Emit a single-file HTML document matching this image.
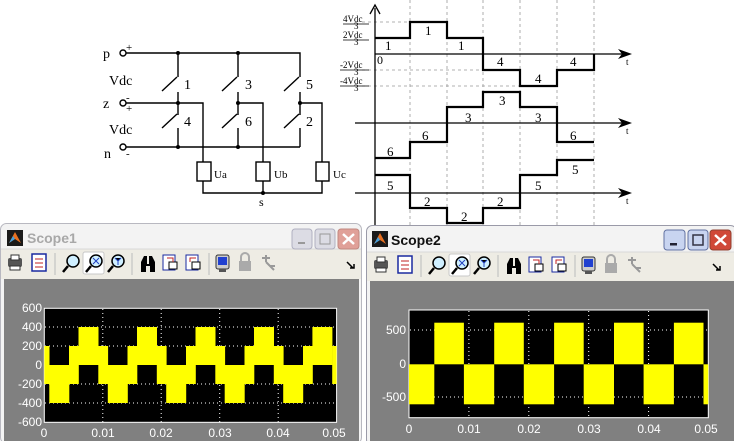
<!DOCTYPE html>
<html><head><meta charset="utf-8"><style>
html,body{margin:0;padding:0;background:#fff;width:734px;height:441px;overflow:hidden}
svg{display:block}
.sf{font-family:"Liberation Serif",serif;fill:#000}
.ss{font-family:"Liberation Sans",sans-serif;fill:#fff;font-size:12px}
</style></head><body>
<svg width="734" height="441" viewBox="0 0 734 441" xmlns="http://www.w3.org/2000/svg">
<rect width="734" height="441" fill="#fff"/>
<!-- circuit -->
<g stroke="#000" stroke-width="1.4" fill="none">
<circle cx="123" cy="53" r="3" fill="#fff"/>
<circle cx="123" cy="103" r="3" fill="#fff"/>
<circle cx="123" cy="147" r="3" fill="#fff"/>
<path d="M126 53H300V77M178 53V77M238 53V77"/>
<path d="M162 91L177 77M222 91L237 77M284 91L299 77"/>
<path d="M178 92V115M238 92V115M300 92V115"/>
<path d="M126 103H203V162M238 103H263V162M300 103H322V162"/>
<path d="M162 128L177 114M222 128L237 114M284 128L299 114"/>
<path d="M178 128V147M238 128V147M300 128V147M126 147H300"/>
<rect x="197" y="162" width="14" height="19"/><rect x="256" y="162" width="14" height="19"/><rect x="316" y="162" width="13" height="19"/>
<path d="M203 181V193H322V181M263 181V193"/>
</g>
<g fill="#000"><circle cx="178" cy="53" r="2"/><circle cx="238" cy="53" r="2"/><circle cx="178" cy="103" r="2"/><circle cx="238" cy="103" r="2"/><circle cx="300" cy="103" r="2"/><circle cx="178" cy="147" r="2"/><circle cx="238" cy="147" r="2"/><circle cx="263" cy="193" r="2"/></g>
<g class="sf" font-size="14">
<text x="103" y="58">p</text><text x="103" y="108">z</text><text x="104" y="158">n</text>
<text x="109" y="85">Vdc</text><text x="109" y="134">Vdc</text>
<text x="184" y="89">1</text><text x="245" y="89">3</text><text x="306" y="89">5</text>
<text x="184" y="126">4</text><text x="245" y="126">6</text><text x="306" y="126">2</text>
<text x="259" y="206" font-size="12">s</text>
</g>
<g class="sf" font-size="11"><text x="126" y="51">+</text><text x="126" y="101">-</text><text x="126" y="112">+</text><text x="126" y="157">-</text>
<text x="214" y="178">Ua</text><text x="274" y="178">Ub</text><text x="333" y="178">Uc</text></g>
<!-- waveforms diagram -->
<g stroke="#999" stroke-width="0.8" stroke-dasharray="3,3" fill="none">
<path d="M410 0V225M447 0V225M483 0V225M520 0V225M557 0V225M594 0V225"/>
<path d="M362 22H410M362 70H483M362 86H520"/>
</g>
<g stroke="#000" stroke-width="1.3" fill="none">
<path d="M375 8V225M370 14L375 5L380 14"/>
<path d="M375 54H628M355 123H628M355 193H628"/>
</g>
<g fill="#000"><path d="M618 49L632 54L618 59L622 54Z"/><path d="M618 118L632 123L618 128L622 123Z"/><path d="M618 188L632 193L618 198L622 193Z"/></g>
<g stroke="#000" stroke-width="2.2" fill="none">
<path d="M375 38H410V22H447V38H483V70H520V86H557V70H594V54"/>
<path d="M375 158H410V142H447V107H483V92H520V107H557V142H594"/>
<path d="M375 175H410V208H447V223H483V208H520V175H557V160H594"/>
</g>
<g class="sf" font-size="13">
<text x="385" y="50">1</text><text x="425" y="35">1</text><text x="458" y="50">1</text>
<text x="497" y="66">4</text><text x="535" y="83">4</text><text x="570" y="66">4</text>
<text x="387" y="156">6</text><text x="422" y="140">6</text><text x="465" y="122">3</text><text x="499" y="105">3</text><text x="535" y="122">3</text><text x="570" y="140">6</text>
<text x="387" y="190">5</text><text x="424" y="206">2</text><text x="461" y="221">2</text><text x="497" y="206">2</text><text x="535" y="190">5</text><text x="572" y="174">5</text>
<text x="377" y="64" font-size="12">0</text>
<text x="626" y="65" font-size="9">t</text><text x="626" y="134" font-size="9">t</text><text x="626" y="204" font-size="9">t</text>
</g>
<g class="sf" font-size="9">
<text x="343" y="22">4Vdc</text><text x="354" y="29">3</text>
<text x="343" y="38">2Vdc</text><text x="354" y="45">3</text>
<text x="340" y="68">-2Vdc</text><text x="354" y="75">3</text>
<text x="340" y="84">-4Vdc</text><text x="354" y="91">3</text>
</g>
<g stroke="#000" stroke-width="0.7"><path d="M343 24H369M343 40H369M340 70H369M340 86H369"/></g>

<!-- Scope1 window -->
<rect x="0.5" y="223.5" width="361" height="220" rx="6" fill="#f3f3f3" stroke="#b8b8c0"/>
<rect x="1" y="249" width="360" height="30" fill="#eeece4"/>
<line x1="1" y1="249" x2="361" y2="249" stroke="#d8d8d8"/>
<rect x="4" y="279" width="355" height="162" fill="#808080"/>
<g><rect x="7" y="230" width="16" height="16" fill="#1a1a1a"/><path d="M9 243L15 232L21 243L15 239Z" fill="#e87020"/><path d="M9 243L13 236L15 239Z" fill="#40a0e0"/></g>
<text x="27" y="243" font-family="Liberation Sans,sans-serif" font-size="14" font-weight="bold" fill="#a8a8a8">Scope1</text>
<rect x="292" y="229" width="20" height="20" rx="3" fill="#dcdce4" stroke="#b0b0c0"/><rect x="298" y="242" width="7" height="2" fill="#999"/>
<rect x="315" y="229" width="20" height="20" rx="3" fill="#dcdce4" stroke="#b0b0c0"/><rect x="320" y="234" width="10" height="10" fill="none" stroke="#999"/>
<rect x="338" y="229" width="21" height="20" rx="3" fill="#e0a098" stroke="#c08880"/><path d="M343 234L354 244M354 234L343 244" stroke="#fff" stroke-width="2.5"/>
<!-- toolbar icons scope1 -->
<g id="tb">
<rect x="8" y="258" width="14" height="9" rx="2" fill="#555"/><rect x="11" y="255" width="8" height="5" fill="#fff" stroke="#333"/><rect x="10" y="266" width="10" height="4" fill="#fff" stroke="#333"/>
<rect x="32" y="254" width="14" height="17" fill="#fff" stroke="#1a2aa0" stroke-width="1.5"/><path d="M35 259H43M35 263H43M35 267H43" stroke="#c02020"/>
<line x1="55" y1="253" x2="55" y2="275" stroke="#bbb"/>
<circle cx="73" cy="261" r="6" fill="#cfefff" stroke="#000" stroke-width="1.5"/><path d="M68 266L63 272" stroke="#000" stroke-width="2.5"/>
<rect x="83" y="252" width="21" height="22" rx="2" fill="#fff" stroke="#c8c8c8"/>
<circle cx="96" cy="261" r="6" fill="#cfefff" stroke="#000" stroke-width="1.5"/><path d="M91 266L86 272" stroke="#000" stroke-width="2.5"/><path d="M93 258L99 264M99 258L93 264" stroke="#2040c0"/>
<circle cx="118" cy="261" r="6" fill="#cfefff" stroke="#000" stroke-width="1.5"/><path d="M113 266L108 272" stroke="#000" stroke-width="2.5"/><path d="M115 258L118 261L121 258M118 261V265" stroke="#2040c0"/>
<line x1="132" y1="253" x2="132" y2="275" stroke="#bbb"/>
<path d="M141 272V262L144 256H147V264H149V256H152L155 262V272H150V266H146V272Z" fill="#000"/>
<rect x="163" y="255" width="12" height="15" fill="#fff" stroke="#1a2aa0"/><rect x="169" y="262" width="8" height="7" fill="#fff" stroke="#000"/><path d="M167 258H173V262" stroke="#c02020" fill="none"/>
<rect x="186" y="255" width="12" height="15" fill="#fff" stroke="#1a2aa0"/><rect x="192" y="262" width="8" height="7" fill="#fff" stroke="#000"/><path d="M196 258H190V262" stroke="#c02020" fill="none"/>
<line x1="209" y1="253" x2="209" y2="275" stroke="#bbb"/>
<rect x="216" y="255" width="13" height="14" rx="2" fill="#ccc" stroke="#333"/><rect x="218" y="257" width="9" height="8" fill="#2040d0"/><rect x="219" y="269" width="7" height="3" fill="#555"/>
<rect x="239" y="261" width="12" height="10" fill="#aaa"/><path d="M241 261V257A4 4 0 0 1 249 257V261" stroke="#aaa" stroke-width="2" fill="none"/>
<path d="M262 258H270M266 255V262M266 262L274 270M270 266H275" stroke="#999" stroke-width="2"/>
<path d="M347 262L353 268M350 268H354V264" stroke="#000" stroke-width="1.5" fill="none"/>
</g>
<!-- Scope1 axes -->
<rect x="44.3" y="308.3" width="292.3" height="114" fill="#000" stroke="#fff" stroke-width="1"/>
<g stroke="#fff" stroke-width="1" stroke-dasharray="1,3"><path d="M102.8 309V422M161.2 309V422M219.7 309V422M278.2 309V422M45 327H336M45 346H336M45 384H336M45 403H336"/></g>
<g fill="#ffff00">
<rect x="44.3" y="346" width="5.2" height="38"/><rect x="69" y="346" width="9.8" height="38"/><rect x="98.3" y="346" width="9.8" height="38"/><rect x="127.5" y="346" width="9.8" height="38"/><rect x="156.8" y="346" width="9.8" height="38"/><rect x="186" y="346" width="9.8" height="38"/><rect x="215.3" y="346" width="9.8" height="38"/><rect x="244.5" y="346" width="9.8" height="38"/><rect x="273.8" y="346" width="9.8" height="38"/><rect x="303" y="346" width="9.8" height="38"/><rect x="332.2" y="346" width="4.4" height="38"/>
<rect x="78.5" y="327" width="20" height="38"/><rect x="137" y="327" width="20" height="38"/><rect x="195.5" y="327" width="20" height="38"/><rect x="254" y="327" width="20" height="38"/><rect x="312.4" y="327" width="20" height="38"/>
<rect x="49.3" y="365" width="20" height="38"/><rect x="107.8" y="365" width="20" height="38"/><rect x="166.2" y="365" width="20" height="38"/><rect x="224.7" y="365" width="20" height="38"/><rect x="283.2" y="365" width="20" height="38"/>
</g>
<g class="ss" text-anchor="end"><text x="42" y="312">600</text><text x="42" y="331">400</text><text x="42" y="350">200</text><text x="42" y="369">0</text><text x="42" y="388">-200</text><text x="42" y="407">-400</text><text x="42" y="426">-600</text></g>
<g class="ss" text-anchor="middle"><text x="44" y="437">0</text><text x="103" y="437">0.01</text><text x="161" y="437">0.02</text><text x="220" y="437">0.03</text><text x="278" y="437">0.04</text><text x="334" y="437">0.05</text></g>

<!-- Scope2 window -->
<rect x="366.5" y="225.5" width="370" height="220" rx="6" fill="#f3f3f3" stroke="#9a9aa8"/>
<rect x="367" y="252" width="367" height="29" fill="#eeece4"/>
<line x1="367" y1="252" x2="734" y2="252" stroke="#d8d8d8"/>
<rect x="370" y="281" width="364" height="160" fill="#808080"/>
<g><rect x="372" y="231" width="16" height="16" fill="#1a1a1a"/><path d="M374 244L380 233L386 244L380 240Z" fill="#e87020"/><path d="M374 244L378 237L380 240Z" fill="#40a0e0"/></g>
<text x="391" y="245" font-family="Liberation Sans,sans-serif" font-size="14" font-weight="bold" fill="#111">Scope2</text>
<rect x="664" y="230" width="21" height="20" rx="3" fill="#c8d4f0" stroke="#6070a0"/><rect x="670" y="243" width="7" height="2.5" fill="#223"/>
<rect x="688" y="230" width="20" height="20" rx="3" fill="#c8d4f0" stroke="#6070a0"/><rect x="693" y="235" width="10" height="10" fill="none" stroke="#334" stroke-width="1.5"/>
<rect x="710" y="230" width="21" height="20" rx="3" fill="#d04838" stroke="#904030"/><path d="M715 235L726 245M726 235L715 245" stroke="#fff" stroke-width="2.5"/>
<use href="#tb" x="366" y="2"/>
<!-- Scope2 axes -->
<rect x="409" y="310" width="299.3" height="107.7" fill="#000" stroke="#fff" stroke-width="1"/>
<g stroke="#fff" stroke-width="1" stroke-dasharray="1,3"><path d="M468.9 311V417M528.8 311V417M588.7 311V417M648.6 311V417M410 330H708M410 397H708"/></g>
<g fill="#ffff00">
<rect x="434.3" y="322.7" width="29.6" height="41.6"/><rect x="494.2" y="322.7" width="29.6" height="41.6"/><rect x="554.1" y="322.7" width="29.6" height="41.6"/><rect x="614" y="322.7" width="29.6" height="41.6"/><rect x="673.9" y="322.7" width="29.6" height="41.6"/>
<rect x="409" y="364.3" width="25.3" height="40"/><rect x="463.9" y="364.3" width="30.3" height="40"/><rect x="523.8" y="364.3" width="30.3" height="40"/><rect x="583.7" y="364.3" width="30.3" height="40"/><rect x="643.6" y="364.3" width="30.3" height="40"/><rect x="703.5" y="364.3" width="4.8" height="40"/>
</g>
<g class="ss" text-anchor="end"><text x="406" y="334">500</text><text x="406" y="368">0</text><text x="406" y="401">-500</text></g>
<g class="ss" text-anchor="middle"><text x="409" y="433">0</text><text x="469" y="433">0.01</text><text x="529" y="433">0.02</text><text x="589" y="433">0.03</text><text x="649" y="433">0.04</text><text x="706" y="433">0.05</text></g>
</svg>
</body></html>
